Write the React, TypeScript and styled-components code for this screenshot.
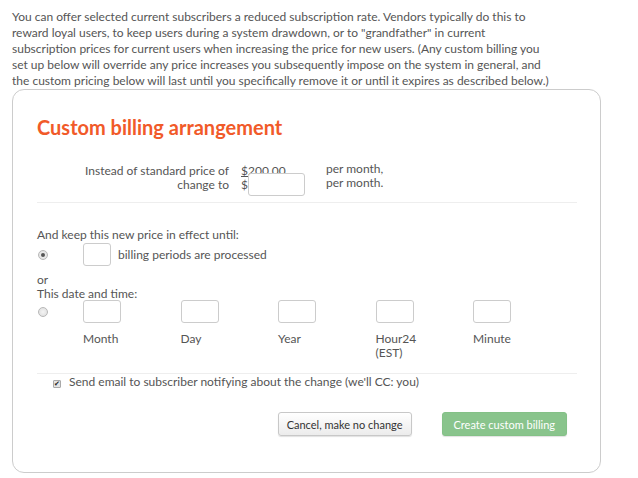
import React from "react";
import styled, { createGlobalStyle } from "styled-components";

const GlobalStyle = createGlobalStyle`
  body {
    margin: 0;
    font-family: Lato, "Open Sans", sans-serif;
    font-size: 12px;
    color: #555555;
    background: #ffffff;
  }
`;

const Page = styled.div`
  padding: 9px 12px 0 12px;
  width: 589px;
`;

const Intro = styled.p`
  margin: 0;
  width: 540px;
  line-height: 16px;
`;

const Card = styled.div`
  box-sizing: border-box;
  width: 589px;
  height: 384px;
  border: 1px solid #cccccc;
  border-radius: 12px;
  padding: 25px 23px 0 24px;
`;

const Title = styled.h2`
  margin: 0;
  font-size: 20px;
  line-height: 24px;
  font-weight: 700;
  color: #f15a29;
`;

const PriceGrid = styled.div`
  display: grid;
  grid-template-columns: 192px 73px auto;
  column-gap: 12px;
  margin-top: 25px;
  line-height: 14px;
`;

const RightLabels = styled.div`
  text-align: right;
`;

const OldPrice = styled.div`
  text-decoration: underline;
  margin-bottom: -5px;
`;

const InlineRow = styled.div<{ $gap?: number }>`
  display: flex;
  align-items: center;
  gap: ${(p) => p.$gap ?? 0}px;
`;

const Field = styled.input<{ $w: number }>`
  box-sizing: border-box;
  width: ${(p) => p.$w}px;
  height: 23px;
  border: 1px solid #cccccc;
  border-radius: 3px;
  padding: 2px 4px;
  font: inherit;
  outline: none;
`;

const PerMonth = styled.div`
  margin-top: -2px;
`;

const Divider = styled.hr<{ $top: number }>`
  border: 0;
  border-top: 1px solid #eeeeee;
  margin: ${(p) => p.$top}px 0 0 0;
`;

const Line = styled.div<{ $top?: number }>`
  line-height: 14px;
  margin-top: ${(p) => p.$top ?? 0}px;
`;

const OptionRow = styled.div<{ $top?: number }>`
  display: grid;
  grid-template-columns: 46px auto;
  align-items: center;
  margin-top: ${(p) => p.$top ?? 0}px;
`;

const Radio = styled.span<{ $checked?: boolean }>`
  box-sizing: border-box;
  width: 10px;
  height: 10px;
  margin-left: 1px;
  border-radius: 50%;
  border: 1px solid #b8b8b8;
  background: radial-gradient(circle, #f4f4f4 0%, #dcdcdc 100%);
  display: flex;
  align-items: center;
  justify-content: center;
  &::after {
    content: "";
    width: 4px;
    height: 4px;
    border-radius: 50%;
    background: ${(p) => (p.$checked ? "#555555" : "transparent")};
  }
`;

const DateGrid = styled.div`
  display: grid;
  grid-template-columns: repeat(5, 97.5px);
`;

const DateLabel = styled.div`
  line-height: 14px;
  margin-top: 9px;
`;

const CheckRow = styled.label`
  display: flex;
  align-items: center;
  gap: 8px;
  margin: 1px 0 0 16px;
  line-height: 14px;
`;

const CheckBox = styled.span`
  box-sizing: border-box;
  width: 8px;
  height: 8px;
  margin-top: 3px;
  border: 1px solid #a9a9a9;
  border-radius: 1px;
  background: #e4e4e4;
  display: flex;
  align-items: center;
  justify-content: center;
  font-size: 7px;
  line-height: 1;
  color: #222222;
`;

const Actions = styled.div`
  display: flex;
  justify-content: flex-end;
  gap: 30px;
  margin: 23px 10px 0 0;
`;

const Button = styled.button<{ $primary?: boolean }>`
  box-sizing: border-box;
  height: 24px;
  padding: 0 ${(p) => (p.$primary ? 11 : 8)}px;
  border-radius: 3px;
  font-family: Lato, "Open Sans", sans-serif;
  font-size: 11px;
  border: 1px solid ${(p) => (p.$primary ? "#84c187" : "#c8c8c8")};
  color: ${(p) => (p.$primary ? "#ffffff" : "#333333")};
  background: ${(p) =>
    p.$primary ? "#89c48c" : "linear-gradient(#ffffff, #ececec)"};
  box-shadow: 0 1px 1px rgba(0, 0, 0, 0.12);
`;

const App = () => {
  return (
    <Page>
      <GlobalStyle />
      <Intro>
        You can offer selected current subscribers a reduced subscription rate.
        Vendors typically do this to reward loyal users, to keep users during a
        system drawdown, or to "grandfather" in current subscription prices for
        current users when increasing the price for new users. (Any custom
        billing you set up below will override any price increases you
        subsequently impose on the system in general, and the custom pricing
        below will last until you specifically remove it or until it expires as
        described below.)
      </Intro>
      <Card>
        <Title>Custom billing arrangement</Title>
        <PriceGrid>
          <RightLabels>
            <div>Instead of standard price of</div>
            <div>change to</div>
          </RightLabels>
          <div>
            <OldPrice>$200.00</OldPrice>
            <InlineRow>
              <span>$</span>
              <Field $w={57} />
            </InlineRow>
          </div>
          <PerMonth>
            <div>per month,</div>
            <div>per month.</div>
          </PerMonth>
        </PriceGrid>
        <Divider $top={6} />
        <Line $top={25}>And keep this new price in effect until:</Line>
        <OptionRow $top={1}>
          <Radio $checked />
          <InlineRow $gap={7}>
            <Field $w={28} />
            <span>billing periods are processed</span>
          </InlineRow>
        </OptionRow>
        <Line $top={7}>or</Line>
        <Line>This date and time:</Line>
        <OptionRow $top={-1}>
          <Radio />
          <DateGrid>
            <Field $w={38} />
            <Field $w={38} />
            <Field $w={38} />
            <Field $w={38} />
            <Field $w={38} />
          </DateGrid>
        </OptionRow>
        <OptionRow>
          <span />
          <DateGrid>
            <DateLabel>Month</DateLabel>
            <DateLabel>Day</DateLabel>
            <DateLabel>Year</DateLabel>
            <DateLabel>
              Hour24
              <br />
              (EST)
            </DateLabel>
            <DateLabel>Minute</DateLabel>
          </DateGrid>
        </OptionRow>
        <Divider $top={13} />
        <CheckRow>
          <CheckBox>✔</CheckBox>
          <span>Send email to subscriber notifying about the change (we'll CC: you)</span>
        </CheckRow>
        <Actions>
          <Button>Cancel, make no change</Button>
          <Button $primary>Create custom billing</Button>
        </Actions>
      </Card>
    </Page>
  );
};

export default App;
